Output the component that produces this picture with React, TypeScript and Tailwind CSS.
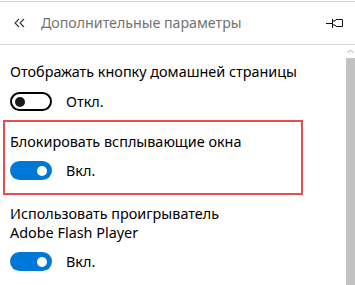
import React from 'react';

const font = { fontFamily: '"Noto Sans", "Open Sans", sans-serif' };

interface ToggleProps {
  on: boolean;
}

const Toggle: React.FC<ToggleProps> = ({ on }) => {
  if (on) {
    return (
      <div className="w-[42px] h-[19px] rounded-full bg-[#0078d7] flex items-center justify-end pr-[5px]">
        <div className="w-[10px] h-[10px] rounded-full bg-white" />
      </div>
    );
  }
  return (
    <div className="w-[42px] h-[19px] rounded-full border-2 border-black flex items-center pl-[3px]">
      <div className="w-[10px] h-[10px] rounded-full bg-[#1a1a1a]" />
    </div>
  );
};

const ToggleRow: React.FC<ToggleProps> = ({ on }) => (
  <div className="flex items-center gap-[14px]">
    <Toggle on={on} />
    <span className="text-[14.4px] leading-[19px] text-black">{on ? 'Вкл.' : 'Откл.'}</span>
  </div>
);

const App: React.FC = () => {
  return (
    <div className="w-[355px] h-[285px] bg-white overflow-hidden flex flex-col" style={font}>
      <div className="h-px mt-px bg-[#d4d4d4]" />
      <div className="h-[42px] flex items-center">
        <svg className="ml-[14px]" width="11" height="10" viewBox="0 0 11 10" fill="none" stroke="#333" strokeWidth="1.1">
          <path d="M5 1 L1 5 L5 9" />
          <path d="M10 1 L6 5 L10 9" />
        </svg>
        <span className="ml-[16px] text-[14.2px] text-[#737373]">Дополнительные параметры</span>
        <svg className="ml-auto mr-[12px]" width="17" height="10" viewBox="0 0 17 10" fill="none" stroke="#111" strokeWidth="1">
          <path d="M0 5.5 H6" />
          <path d="M6.5 1 V10" />
          <path d="M6.5 3 H9 L10 1.5 H16.5 V8.5 H10 L9 7 H6.5" />
        </svg>
      </div>
      <div className="h-px bg-[#d4d4d4]" />
      <div className="flex-1 flex">
        <div className="flex-1 flex flex-col">
          <div className="pl-[10px] mt-[17px]">
            <p className="text-[14.4px] leading-[20px] text-black">Отображать кнопку домашней страницы</p>
            <div className="mt-[10px]">
              <ToggleRow on={false} />
            </div>
          </div>
          <div className="ml-[3px] w-[300px] mt-[9px] border-2 border-[#e84c4c] pl-[5px] pt-[10px] pb-[13px]">
            <p className="text-[14.4px] leading-[20px] text-black">Блокировать всплывающие окна</p>
            <div className="mt-[9px]">
              <ToggleRow on={true} />
            </div>
          </div>
          <div className="pl-[10px] mt-[9px]">
            <p className="text-[14.4px] leading-[19px] text-black">
              Использовать проигрыватель
              <br />
              Adobe Flash Player
            </p>
            <div className="mt-[10px]">
              <ToggleRow on={true} />
            </div>
          </div>
        </div>
        <div className="w-[9px] flex flex-col items-center">
          <svg className="mt-[4px]" width="7" height="5" viewBox="0 0 7 5" fill="none" stroke="#a6a6a6" strokeWidth="1">
            <path d="M0.5 4 L3.5 1 L6.5 4" />
          </svg>
          <div className="mt-[4px] w-full flex-1 bg-[#c2c2c2]" />
        </div>
      </div>
    </div>
  );
};

export default App;
